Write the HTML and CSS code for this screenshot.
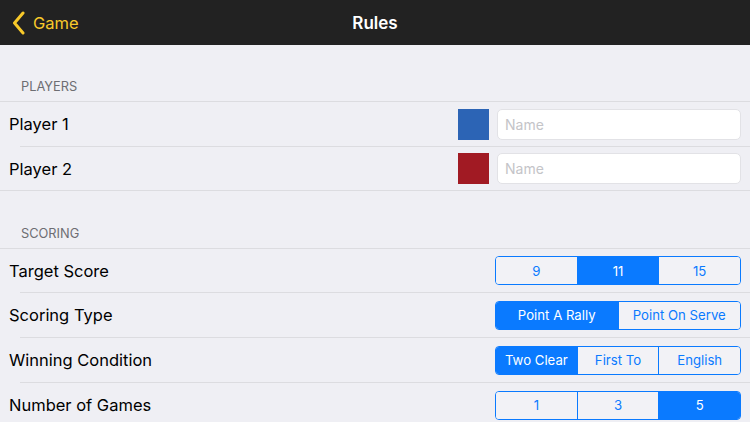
FILE: index.html
```html
<!DOCTYPE html>
<html>
<head>
<meta charset="utf-8">
<link rel="stylesheet" href="styles.css">
</head>
<body>
<header class="navbar">
  <div class="back">
    <svg class="chev" width="14" height="24" viewBox="0 0 14 24"><path d="M11 2 L2.5 12 L11 22" fill="none" stroke="#f8c92a" stroke-width="3" stroke-linecap="round" stroke-linejoin="round"/></svg>
    <span>Game</span>
  </div>
  <div class="title">Rules</div>
</header>
<main class="content">
  <section class="group players">
    <div class="group-label">PLAYERS</div>
    <div class="rows">
      <div class="row">
        <span class="label">Player 1</span>
        <div class="player-ctrl">
          <span class="swatch blue"></span>
          <div class="input">Name</div>
        </div>
      </div>
      <div class="row">
        <span class="label">Player 2</span>
        <div class="player-ctrl">
          <span class="swatch red"></span>
          <div class="input">Name</div>
        </div>
      </div>
    </div>
  </section>
  <section class="group scoring">
    <div class="group-label">SCORING</div>
    <div class="rows">
      <div class="row">
        <span class="label">Target Score</span>
        <div class="seg">
          <span>9</span><span class="on">11</span><span>15</span>
        </div>
      </div>
      <div class="row">
        <span class="label">Scoring Type</span>
        <div class="seg">
          <span class="on">Point A Rally</span><span>Point On Serve</span>
        </div>
      </div>
      <div class="row">
        <span class="label">Winning Condition</span>
        <div class="seg">
          <span class="on">Two Clear</span><span>First To</span><span>English</span>
        </div>
      </div>
      <div class="row">
        <span class="label">Number of Games</span>
        <div class="seg">
          <span>1</span><span>3</span><span class="on">5</span>
        </div>
      </div>
    </div>
  </section>
</main>
</body>
</html>
```
FILE: styles.css
```css
* { box-sizing: border-box; }
html, body { margin: 0; padding: 0; }
body {
  width: 750px;
  height: 422px;
  overflow: hidden;
  background: #efeff4;
  font-family: Inter, "Noto Sans", sans-serif;
  color: #000;
}
.navbar {
  height: 45px;
  background: #222222;
  position: relative;
  display: flex;
  align-items: center;
  justify-content: center;
}
.back {
  position: absolute;
  left: 12px;
  top: 0;
  height: 45px;
  display: flex;
  align-items: center;
  gap: 7px;
  color: #f8c92a;
  font-size: 16.5px;
}
.chev { display: block; }
.title {
  color: #fff;
  font-size: 17px;
  font-weight: 600;
}
.group-label {
  height: 56px;
  padding: 0 0 7px 21px;
  display: flex;
  align-items: flex-end;
  font-size: 12.8px;
  color: #6d6d72;
}
.scoring .group-label { height: 57px; }
.rows {
  border-top: 1px solid #dcdce0;
  border-bottom: 1px solid #dcdce0;
}
.row {
  height: 44px;
  display: flex;
  align-items: center;
  justify-content: space-between;
  padding: 0 9px 0 9px;
  position: relative;
}
.row + .row::before {
  content: "";
  position: absolute;
  left: 20px;
  right: 0;
  top: 0;
  height: 1px;
  background: #dcdce0;
}
.row + .row { height: 45px; padding-top: 1px; }
.players .row + .row { height: 44px; }
.scoring .row:first-child { height: 43px; }
.label { font-size: 16.5px; }
.player-ctrl {
  display: flex;
  align-items: center;
  gap: 8px;
}
.swatch { width: 31px; height: 31px; display: block; }
.blue { background: #2c64b5; }
.red { background: #a11a23; }
.input {
  width: 244px;
  height: 31px;
  background: #fff;
  border-radius: 5px;
  border: 1px solid #e2e2e6;
  color: #c4c4c8;
  font-size: 14px;
  display: flex;
  align-items: center;
  padding-left: 7px;
}
.seg {
  width: 246px;
  height: 29px;
  display: flex;
  border: 1px solid #0a7aff;
  border-radius: 4px;
  overflow: hidden;
}
.seg span {
  flex: 1;
  display: flex;
  align-items: center;
  justify-content: center;
  color: #0a7aff;
  font-size: 13.2px;
  background: #f2f2f6;
}
.seg span + span { border-left: 1px solid #0a7aff; }
.seg span.on { background: #0a7aff; color: #fff; }
```
